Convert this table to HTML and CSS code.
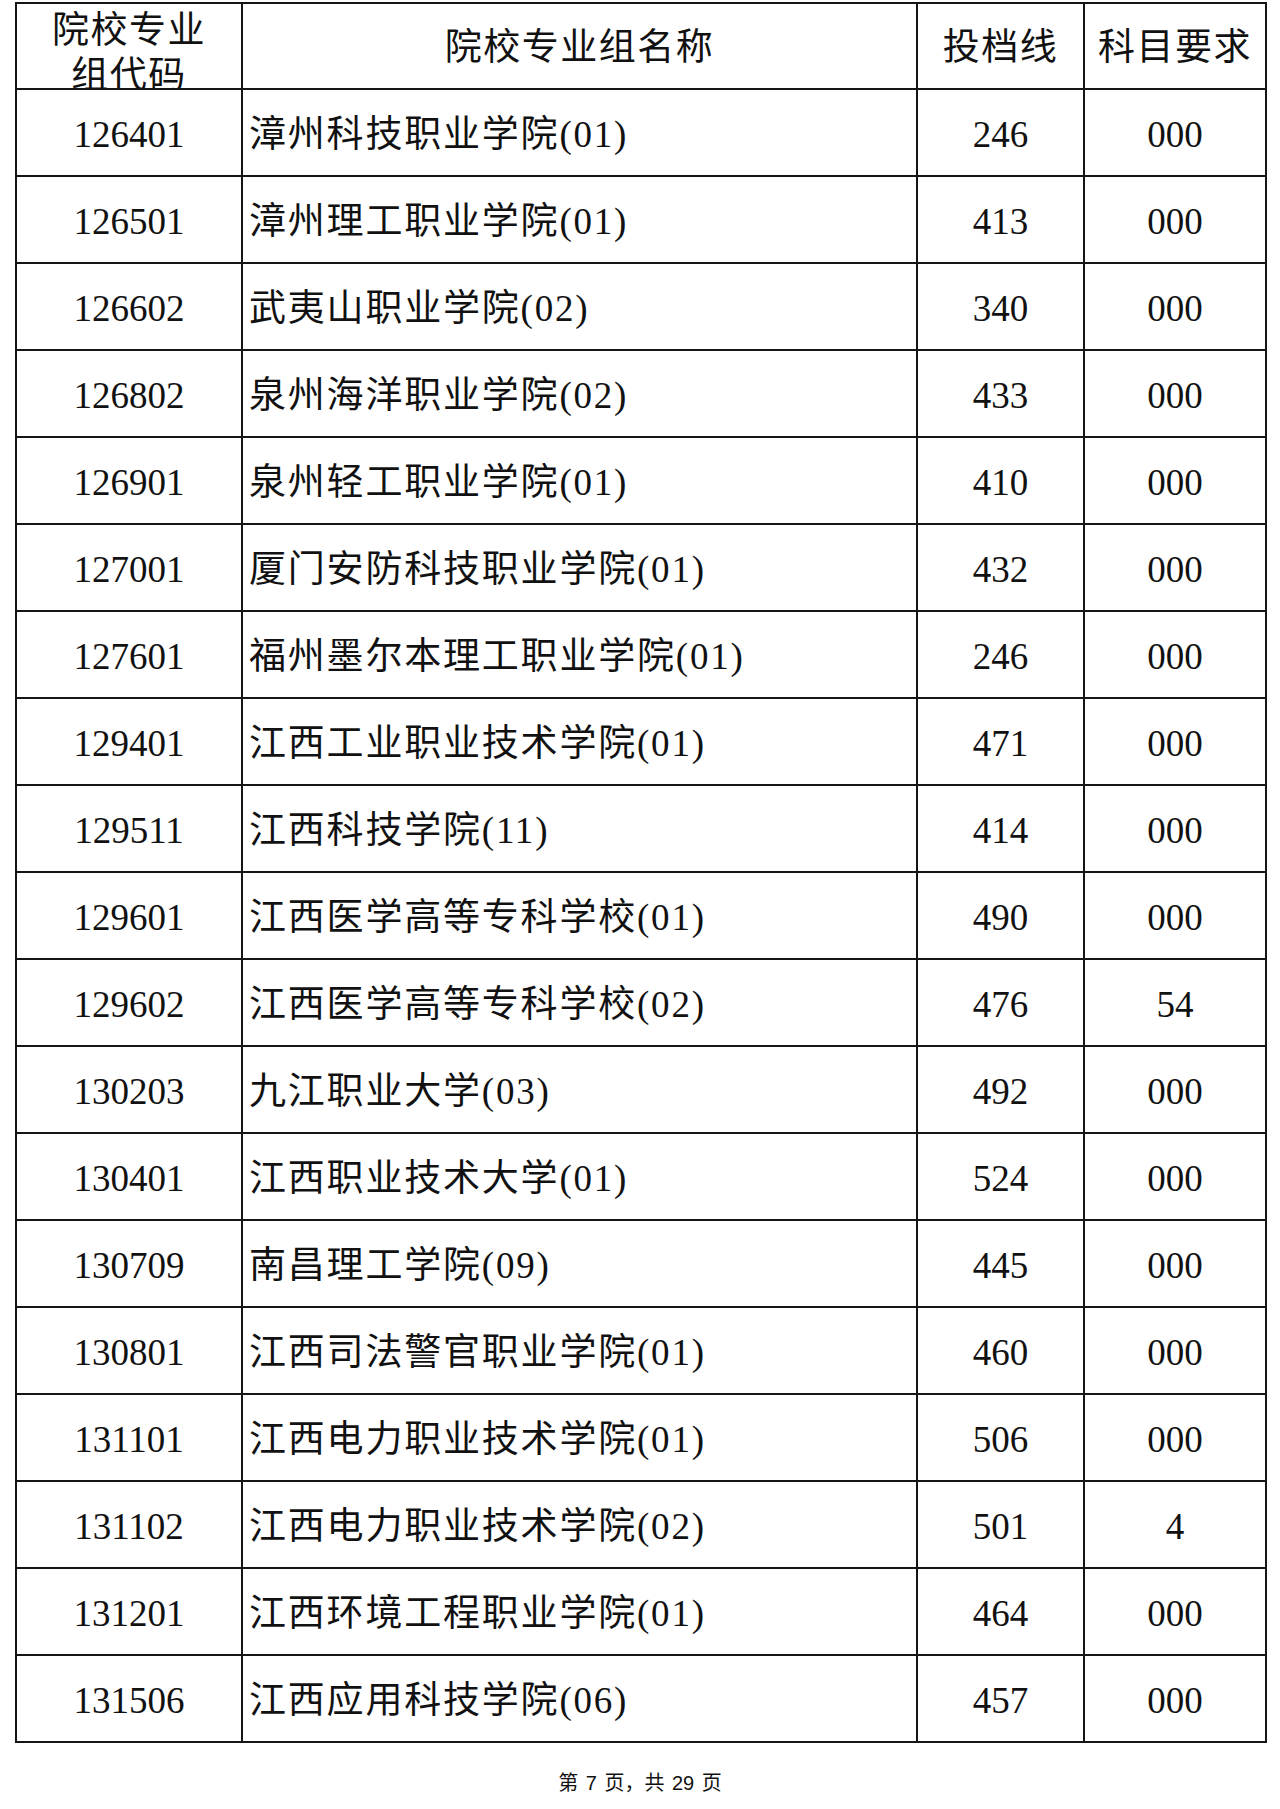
FILE: index.html
```html
<!DOCTYPE html>
<html lang="zh-CN">
<head>
<meta charset="utf-8">
<title>院校专业组投档线</title>
<link rel="stylesheet" href="styles.css">
</head>
<body>
<div class="page">
<table class="score-table">
  <colgroup>
    <col class="c-code">
    <col class="c-name">
    <col class="c-line">
    <col class="c-req">
  </colgroup>
  <thead>
    <tr>
      <th class="h-code"><div class="clip">院校专业<br>组代码</div></th>
      <th>院校专业组名称</th>
      <th>投档线</th>
      <th>科目要求</th>
    </tr>
  </thead>
  <tbody>
    <tr><td>126401</td><td class="name">漳州科技职业学院(01)</td><td>246</td><td>000</td></tr>
    <tr><td>126501</td><td class="name">漳州理工职业学院(01)</td><td>413</td><td>000</td></tr>
    <tr><td>126602</td><td class="name">武夷山职业学院(02)</td><td>340</td><td>000</td></tr>
    <tr><td>126802</td><td class="name">泉州海洋职业学院(02)</td><td>433</td><td>000</td></tr>
    <tr><td>126901</td><td class="name">泉州轻工职业学院(01)</td><td>410</td><td>000</td></tr>
    <tr><td>127001</td><td class="name">厦门安防科技职业学院(01)</td><td>432</td><td>000</td></tr>
    <tr><td>127601</td><td class="name">福州墨尔本理工职业学院(01)</td><td>246</td><td>000</td></tr>
    <tr><td>129401</td><td class="name">江西工业职业技术学院(01)</td><td>471</td><td>000</td></tr>
    <tr><td>129511</td><td class="name">江西科技学院(11)</td><td>414</td><td>000</td></tr>
    <tr><td>129601</td><td class="name">江西医学高等专科学校(01)</td><td>490</td><td>000</td></tr>
    <tr><td>129602</td><td class="name">江西医学高等专科学校(02)</td><td>476</td><td>54</td></tr>
    <tr><td>130203</td><td class="name">九江职业大学(03)</td><td>492</td><td>000</td></tr>
    <tr><td>130401</td><td class="name">江西职业技术大学(01)</td><td>524</td><td>000</td></tr>
    <tr><td>130709</td><td class="name">南昌理工学院(09)</td><td>445</td><td>000</td></tr>
    <tr><td>130801</td><td class="name">江西司法警官职业学院(01)</td><td>460</td><td>000</td></tr>
    <tr><td>131101</td><td class="name">江西电力职业技术学院(01)</td><td>506</td><td>000</td></tr>
    <tr><td>131102</td><td class="name">江西电力职业技术学院(02)</td><td>501</td><td>4</td></tr>
    <tr><td>131201</td><td class="name">江西环境工程职业学院(01)</td><td>464</td><td>000</td></tr>
    <tr><td>131506</td><td class="name">江西应用科技学院(06)</td><td>457</td><td>000</td></tr>
  </tbody>
</table>
<div class="footer">第 7 页，共 29 页</div>
</div>
</body>
</html>
```

FILE: styles.css
```css
html, body {
  margin: 0;
  padding: 0;
  background: #fff;
}

.page {
  padding: 2px 0 0 15px;
}

.score-table {
  border-collapse: collapse;
  table-layout: fixed;
  width: 1250px;
  font-family: "Liberation Serif", "Noto Sans CJK SC", serif;
  font-size: 37px;
  color: #111;
}

.c-code { width: 226px; }
.c-name { width: 675px; }
.c-line { width: 167px; }
.c-req { width: 182px; }

.score-table th,
.score-table td {
  border: 2px solid #151515;
  padding: 3px 0 0;
  text-align: center;
  vertical-align: middle;
  font-weight: normal;
  line-height: 45px;
  white-space: nowrap;
}

.score-table th {
  letter-spacing: 1.5px;
}

.score-table thead th {
  height: 81px;
}

.score-table tbody td {
  height: 82px;
}

.score-table th.h-code {
  vertical-align: top;
  padding-top: 0;
}

.clip {
  height: 84px;
  overflow: hidden;
  padding-top: 4px;
  box-sizing: border-box;
}

.score-table td.name {
  text-align: left;
  padding-left: 6px;
  letter-spacing: 1.8px;
}

.footer {
  margin-top: 28px;
  width: 1250px;
  text-align: center;
  font-family: "Liberation Sans", "Noto Sans CJK SC", sans-serif;
  font-size: 20px;
  line-height: 24px;
  word-spacing: 2px;
  color: #111;
}
```
